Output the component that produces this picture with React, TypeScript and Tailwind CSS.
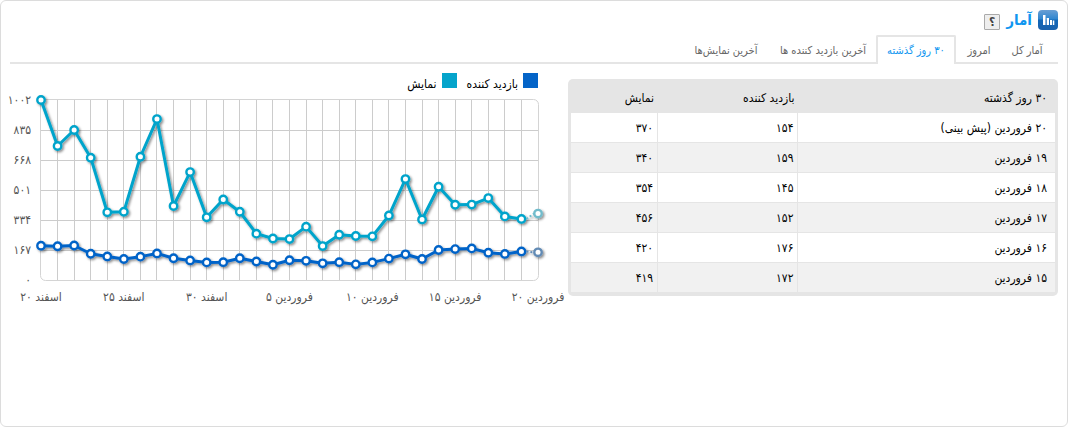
const tabs = [
    { label: "آمار کل", width: "w-[50px]" },
    { label: "امروز", width: "w-[46px]" },
    { label: "۳۰ روز گذشته", width: "w-[80px]" },
    { label: "آخرین بازدید کننده ها", width: "w-[106px]" },
    { label: "آخرین نمایش‌ها", width: "w-[88px]" },
];

const rows = [
    { day: "۲۰ فروردین (پیش بینی)", visitors: "۱۵۴", views: "۳۷۰" },
    { day: "۱۹ فروردین", visitors: "۱۵۹", views: "۳۴۰" },
    { day: "۱۸ فروردین", visitors: "۱۴۵", views: "۳۵۴" },
    { day: "۱۷ فروردین", visitors: "۱۵۲", views: "۴۵۶" },
    { day: "۱۶ فروردین", visitors: "۱۷۶", views: "۴۲۰" },
    { day: "۱۵ فروردین", visitors: "۱۷۲", views: "۴۱۹" },
];

const views = [1002, 746, 835, 681, 377, 380, 686, 896, 412, 601, 349, 448, 380, 258, 231, 228, 297, 189, 252, 245, 243, 359, 562, 337, 519, 419, 420, 456, 354, 340, 370];
const visitors = [191, 188, 192, 146, 131, 117, 130, 148, 121, 109, 98, 99, 121, 103, 85, 110, 107, 93, 99, 87, 98, 119, 143, 117, 167, 172, 176, 152, 145, 159, 154];

const yLabels = ["۱۰۰۲", "۸۳۵", "۶۶۸", "۵۰۱", "۳۳۴", "۱۶۷", "۰"];
const xLabels = ["اسفند ۲۰", "اسفند ۲۵", "اسفند ۳۰", "فروردین ۵", "فروردین ۱۰", "فروردین ۱۵", "فروردین ۲۰"];

const LEFT = 31;
const RIGHT = 528;
const TOP = 9;
const BOTTOM = 189;
const MAX = 1002;

const px = (i: number) => LEFT + (i * (RIGHT - LEFT)) / 30;
const py = (v: number) => BOTTOM - (v * (BOTTOM - TOP)) / MAX;

type SeriesProps = { data: number[]; color: string; faded: string };

const Series = ({ data, color, faded }: SeriesProps) => {
    const points = data.map((v, i) => ({ x: px(i), y: py(v) }));
    const known = points.slice(0, -1);
    const prev = points[points.length - 2];
    const last = points[points.length - 1];

    return (
        <g fill="none" filter="url(#shadow)">
            <polyline points={known.map(p => `${p.x},${p.y}`).join(" ")} stroke={color} strokeWidth={3} strokeLinejoin="round" />
            <line x1={prev.x + 5} y1={prev.y} x2={last.x - 4} y2={last.y} stroke={faded} strokeWidth={2} strokeDasharray="2 2" />
            {points.map((p, i) => (
                <circle key={i} cx={p.x} cy={p.y} r={3.7} fill="#fff" stroke={i === points.length - 1 ? faded : color} strokeWidth={2.4} />
            ))}
        </g>
    );
};

const Chart = () => (
    <svg viewBox="0 0 558 220" className="w-full overflow-visible" direction="ltr" role="img" aria-label="نمودار آمار">
        <defs>
            <filter id="shadow" x="-5%" y="-20%" width="110%" height="150%">
                <feDropShadow dx="1.5" dy="1.5" stdDeviation="1" floodColor="#000" floodOpacity="0.45" />
            </filter>
        </defs>
        <g stroke="#ccc" shapeRendering="crispEdges">
            {views.slice(1, -1).map((_, i) => (
                <line key={i} x1={px(i + 1)} x2={px(i + 1)} y1={TOP} y2={BOTTOM} />
            ))}
            {yLabels.slice(1, -1).map((_, i) => (
                <line key={i} x1={LEFT} x2={RIGHT} y1={TOP + (i + 1) * 30 + 0.5} y2={TOP + (i + 1) * 30 + 0.5} />
            ))}
        </g>
        <rect x={LEFT - 0.5} y={TOP - 0.5} width={RIGHT - LEFT + 1} height={BOTTOM - TOP + 1} rx={5} fill="none" stroke="#d4d4d4" />
        <g fill="#545454" fontSize={12} textAnchor="middle">
            {yLabels.map((label, i) => (
                <text key={label} x={21} y={TOP + i * 30 + 4} textAnchor="end">{label}</text>
            ))}
            {xLabels.map((label, i) => (
                <text key={label} x={px(i * 5)} y={210} direction="rtl">{label}</text>
            ))}
        </g>
        <Series data={views} color="#05a4cb" faded="#72bccc" />
        <Series data={visitors} color="#0464c8" faded="#628bb5" />
    </svg>
);

const Logo = () => (
    <svg width="20" height="20" viewBox="0 0 20 20" aria-hidden="true">
        <defs>
            <linearGradient id="logo" x1="0" y1="0" x2="0" y2="1">
                <stop offset="0" stopColor="#6a9fd4" />
                <stop offset="0.45" stopColor="#2f86cf" />
                <stop offset="0.5" stopColor="#1267b8" />
                <stop offset="1" stopColor="#1b62ad" />
            </linearGradient>
        </defs>
        <rect width="20" height="20" rx="4" fill="url(#logo)" />
        <path d="M5 5h2.500v10H5zM8.700 8h2.300v7H8.700zM12 10h2v5h-2zM14.800 10.500h1.500V15h-1.500z" fill="#fff" />
    </svg>
);

const App = () => {
    return (
        <main dir="rtl" className="min-h-screen rounded-md border border-[#dcdcdc] bg-white px-[9px] pt-[9px] text-[11px] text-black font-['DejaVu_Sans_Condensed','DejaVu_Sans',sans-serif]">
            <header className="flex h-5 items-center gap-1.5">
                <Logo />
                <h1 className="text-[15px] font-bold leading-5 text-[#0f96f0]">آمار</h1>
                <button className="mt-1 h-4 w-4 rounded-[1px] border border-[#aaa] bg-[#eee] text-[12px] font-bold leading-3 text-[#444]">؟</button>
            </header>
            <nav className="mt-[5px] flex h-[29px] border-b-2 border-[#e5e5e5] pr-1.5">
                {tabs.map((tab, i) => (
                    <a
                        key={tab.label}
                        href="#"
                        className={`${tab.width} h-[29px] whitespace-nowrap rounded-t-xs text-center leading-7 ${i === 2 ? "border-2 border-b-0 border-[#e5e5e5] bg-white text-[#0f96f0]" : "pt-0.5 text-[#666]"}`}
                    >
                        {tab.label}
                    </a>
                ))}
            </nav>
            <div className="grid grid-cols-[490fr_558fr] items-start">
                <section className="mt-[15px] rounded-[5px] bg-[#e5e5e5] px-[3px] pb-1">
                    <table className="w-full table-fixed border-separate border-spacing-0 text-right text-[12px]">
                        <thead>
                            <tr className="h-[34px]">
                                <th className="px-2 pt-1 font-normal">۳۰ روز گذشته</th>
                                <th className="w-[29%] px-1 pt-1 font-normal">بازدید کننده</th>
                                <th className="w-[18%] px-1 pt-1 font-normal">نمایش</th>
                            </tr>
                        </thead>
                        <tbody className="[&_td]:border-[#e5e5e5] [&_tr:not(:last-child)_td]:border-b">
                            {rows.map(row => (
                                <tr key={row.day} className="h-[30px] bg-white last:h-[29px] even:bg-[#f1f1f1]">
                                    <td className="px-2">{row.day}</td>
                                    <td className="border-r px-1">{row.visitors}</td>
                                    <td className="border-r px-1">{row.views}</td>
                                </tr>
                            ))}
                        </tbody>
                    </table>
                </section>
                <section className="pt-[9px]">
                    <div className="flex h-[18px] gap-2.5 pr-[30px] text-[12px]">
                        <span className="flex gap-[5px]"><i className="h-[15px] w-[15px] bg-[#0464c8]" /><span className="leading-[22px]">بازدید کننده</span></span>
                        <span className="flex gap-[5px]"><i className="h-[15px] w-[15px] bg-[#05a4cb]" /><span className="leading-[22px]">نمایش</span></span>
                    </div>
                    <Chart />
                </section>
            </div>
        </main>
    );
};

export default App;
